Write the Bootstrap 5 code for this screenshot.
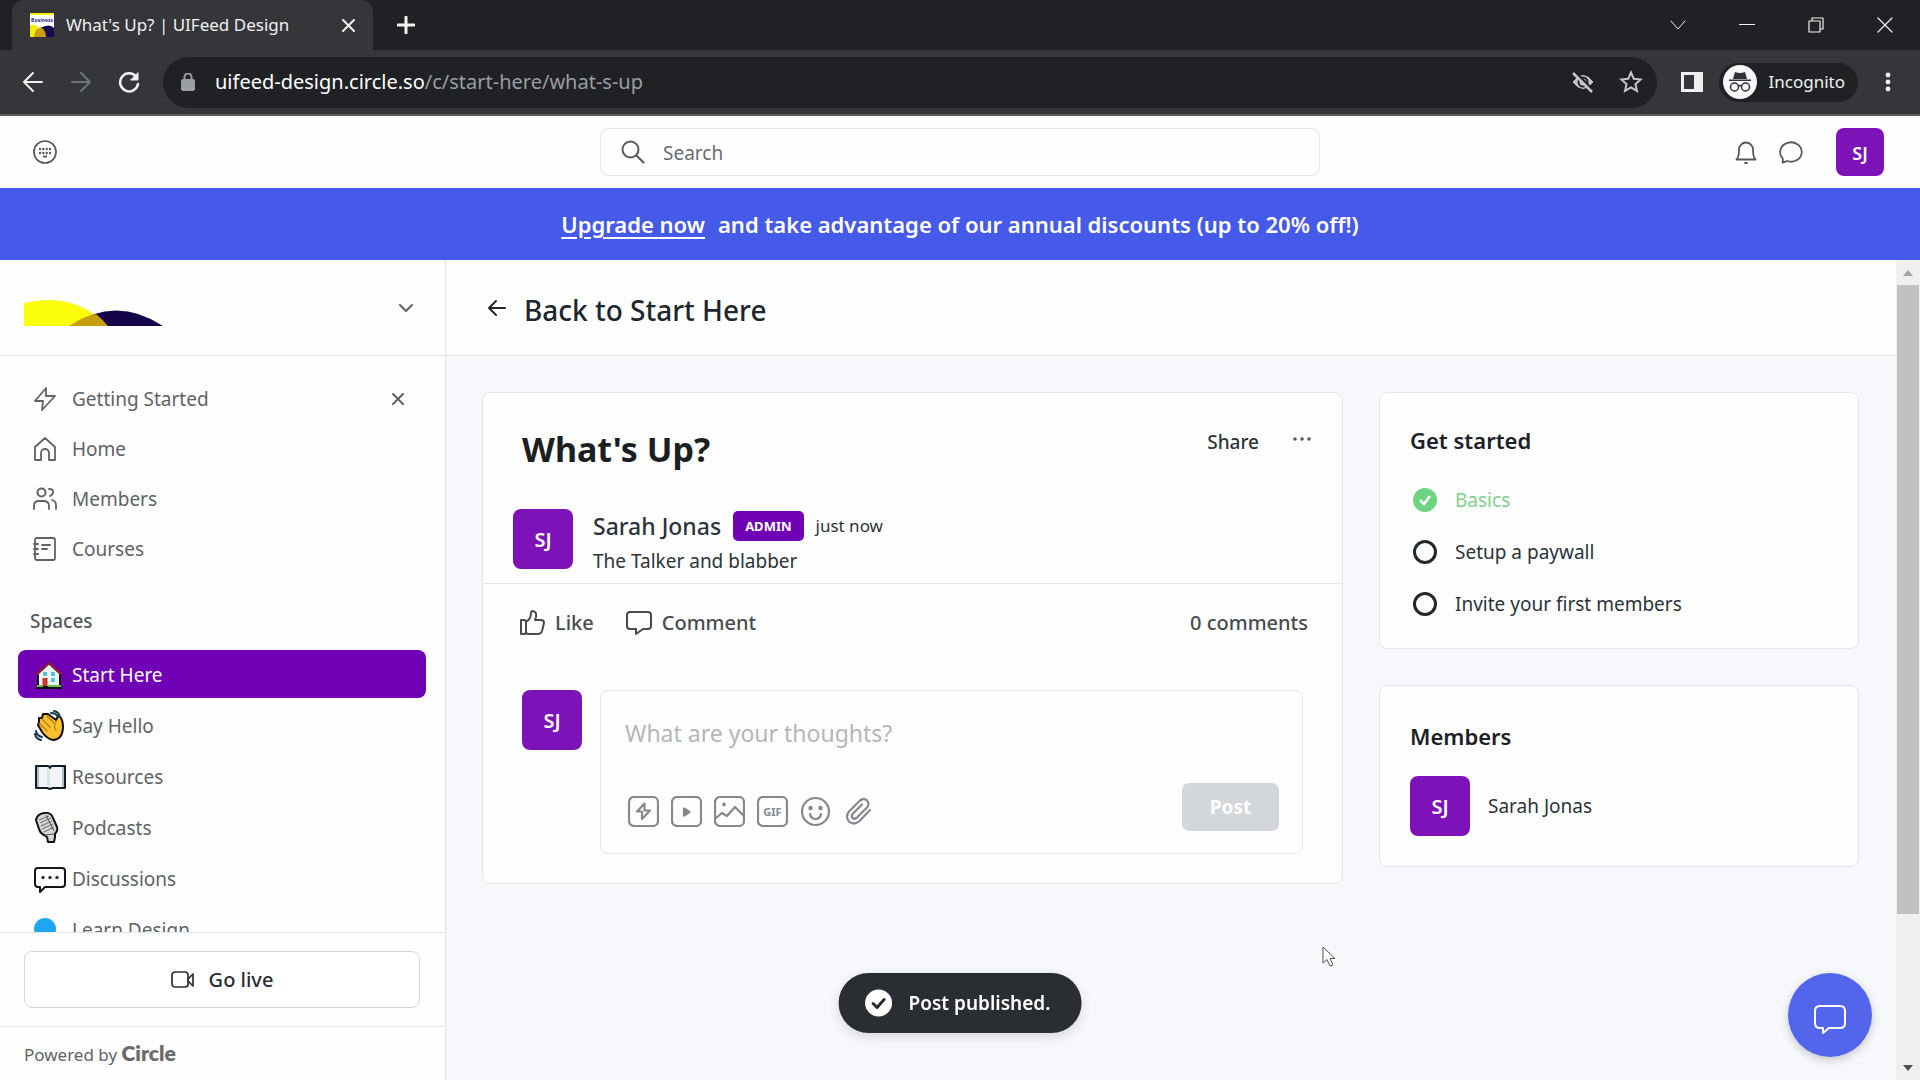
<!DOCTYPE html>
<html lang="en">
<head>
<meta charset="utf-8">
<meta name="viewport" content="width=device-width, initial-scale=1">
<title>What's Up? | UIFeed Design</title>
<link href="https://cdn.jsdelivr.net/npm/bootstrap@5.3.0/dist/css/bootstrap.min.css" rel="stylesheet">
<style>
:root{--ink:#2c333a;--soft:#55585c;--line:#e4e6e9;--brand:#7000b5}
body{font-family:"Noto Sans","Open Sans",sans-serif;font-size:19px;line-height:28px;color:var(--ink);background:#fefefe}
button,input,textarea{font-family:inherit}
svg{flex:none;display:block}
.ico{fill:none;stroke:currentColor;stroke-width:2;stroke-linecap:round;stroke-linejoin:round}
.plain{border:0;background:none;padding:0;color:inherit;display:flex;align-items:center}
a{color:inherit;text-decoration:none}
.fw-medium2{font-weight:500}
/* browser frame */
.tabstrip{height:50px;background:#202124;color:#f1f1f1;padding-left:12px}
.tab-item{width:361px;height:50px;background:#35363a;border-radius:12px 12px 0 0;font-size:17px;padding:0 18px}
.win-btns{gap:53px;padding-right:27px;height:44px}
.toolbar{height:66px;background:#35363a;border-bottom:2px solid #5a5b5f;color:#f1f1f1;padding:0 26px 0 22px}
.nav-btns{gap:26px;padding-right:23px}
.omni{height:51px;border-radius:26px;background:#202124;padding:0 14px 0 18px;color:#9a9da1;font-size:20px}
.omni b{color:#fff;font-weight:400}
.incog{height:39px;border-radius:20px;background:#202124;padding-right:13px;margin-right:26px;font-size:17px;gap:12px}
/* page */
.topbar{height:72px;padding:0 32px;color:var(--soft);display:grid;grid-template-columns:1fr minmax(300px,720px) 1fr}
.searchbox{height:48px;border:1px solid #e6e7ea;border-radius:8px;padding:0 20px;gap:16px}
.searchbox input{border:0;outline:0;background:none;font-size:19px;padding-top:3px}
.searchbox input::placeholder{color:#686b70;opacity:1}
.promo{height:72px;background:#455ae8;color:#fff;font-size:22px;font-weight:600;gap:13px}
.promo a{text-decoration:underline;text-underline-offset:4px;text-decoration-thickness:2px}
.ava{width:60px;height:60px;border-radius:8px;background:#7c12b8;color:#fff;font-weight:600;font-size:20px;display:flex;align-items:center;justify-content:center;flex:none;padding-top:2px}
.ava-sm{width:48px;height:48px;font-size:18px}
.side{width:446px;border-right:1px solid var(--line);color:#606266;flex:none}
.side-head{height:96px;border-bottom:1px solid var(--line);padding:0 29px 0 24px}
.side-nav{padding:18px 19px 0 18px;min-height:0;overflow:hidden}
.side-link{height:50px;padding:0 22px 0 15px}
.side-link,.side-link a{gap:15px}
.space-title{height:50px;padding:0 12px;color:#55585c;margin:22px 0 4px;font-size:19px;font-weight:500;display:flex;align-items:center}
.space-link{height:48px;margin-bottom:3px;padding:2px 16px 0;border-radius:8px;gap:6px}
.space-link svg{width:32px;height:32px}
.space-link.current{background:var(--brand);color:#fff}
.live{border-top:1px solid var(--line);padding:18px 25px 18px 24px;height:94px}
.live button{height:57px;border:1px solid #d5d7da;border-radius:8px;background:#fff;color:#2b2e32;font-weight:500;font-size:20px;gap:14px;width:100%}
.powered{border-top:1px solid var(--line);height:54px;padding-left:24px;font-size:17px}
.powered b{font-family:Lato,"Noto Sans",sans-serif;font-size:21px;color:#6b6b6b;font-weight:800}
.main-head{height:96px;border-bottom:1px solid var(--line);padding-left:40px;color:#20262d;gap:16px;background:#fefefe}
.main-head h1{font-size:28px;line-height:36px;font-weight:500;margin:0;padding-top:4px}
.canvas{background:#f7f8fb;padding:36px 37px 0 36px;gap:36px}
.panel{background:#fefefe;border:1px solid var(--line);border-radius:8px}
.rail{width:480px;flex:none;gap:36px}
.post-title{font-size:34px;line-height:44px;font-weight:700;margin:0;color:#1c1f22}
.post-top{padding:34px 29px 0 39px}
.post-menu{padding-top:1px}
.author{padding:38px 30px 8px;gap:20px;border-bottom:1px solid var(--line)}
.role{font-size:13px;line-height:30px;font-weight:700;background:var(--brand);color:#fff;border-radius:5px;padding:0 12px}
.name-line{font-size:23px;line-height:34px;font-weight:500;gap:12px}
.when{font-size:17px;font-weight:400}
.acts{height:78px;padding:0 34px 0 36px;color:#484b4f;font-weight:500;font-size:20px}
.acts button{gap:10px}
.reply{padding:28px 39px 29px;gap:18px}
.editor{border:1px solid var(--line);border-radius:8px;padding:24px 23px 22px 24px;height:164px}
.editor textarea{border:0;outline:0;resize:none;background:none;padding:0;font-size:23px;line-height:36px;height:36px;overflow:hidden}
.editor textarea::placeholder{color:#b3b6ba;opacity:1}
.tools{gap:12px;color:#85888d;padding:8px 0 0 3px}
.tools .ico{stroke-width:2.2}
.btn-post{width:97px;height:48px;border:0;border-radius:7px;background:#d3d6da;color:#fff;font-weight:700;font-size:19px}
.rail h2{font-size:22px;line-height:32px;font-weight:600;margin:0;color:#1c2127}
.steps{padding:31px 30px 17px;height:257px}
.steps ul{margin-top:26px}
.steps li{height:36px;margin-bottom:16px;gap:18px;padding-left:3px}
.people{padding:34px 30px 30px}
.people-row{gap:18px}
.scroller{width:24px;background:#f0f0f0;flex:none}
.scroller i{width:22px;height:629px;background:#c1c1c1;display:block}
.notice{position:fixed;left:50%;transform:translateX(-50%);bottom:47px;height:60px;border-radius:30px;background:#2a2e32;color:#fff;font-weight:600;padding:0 31px 0 26px;gap:16px;box-shadow:0 4px 12px #0002;white-space:nowrap}
.help{position:fixed;right:48px;bottom:23px;width:84px;height:84px;border-radius:50%;background:#5365ea;border:0;color:#fff;box-shadow:0 3px 10px #0003}
.pointer{position:fixed;left:1322px;top:946px}
</style>
<script src="https://cdn.jsdelivr.net/npm/bootstrap@5.3.0/dist/js/bootstrap.bundle.min.js"></script>
</head>
<body class="vh-100 overflow-hidden d-flex flex-column">
<header class="flex-shrink-0">
  <div class="tabstrip d-flex align-items-center">
    <div class="tab-item d-flex align-items-center">
      <svg width="24" height="24" viewBox="0 0 24 24"><path fill="#fff" d="M0 0h24v24H0z"/><path fill="#f4f000" d="M0 0h24v2H0zM0 12q10-2 14 12H0z"/><path fill="#160a4d" d="M10 15q10-5 14 0v9H14z"/><path fill="#caa010" d="M4 24q1-10 8-9 4 3 4 9z"/><text x="12" y="9" text-anchor="middle" font-size="5" font-weight="700" fill="#2c2a86">Business</text></svg>
      <span class="ms-2 ps-1 flex-grow-1">What's Up? | UIFeed Design</span>
      <button class="plain" aria-label="Close tab"><svg width="13" height="13" viewBox="0 0 13 13" class="ico"><path d="M1 1l11 11M12 1L1 12"/></svg></button>
    </div>
    <button class="plain ms-4" aria-label="New tab"><svg width="18" height="18" viewBox="0 0 18 18" class="ico" style="stroke-width:3"><path d="M9 1v16M1 9h16"/></svg></button>
    <div class="win-btns d-flex align-items-center ms-auto">
      <button class="plain" aria-label="Search tabs"><svg width="16" height="16" viewBox="0 0 16 16" class="ico" style="stroke-width:1"><path d="M1 4l7 8 7-8"/></svg></button>
      <button class="plain" aria-label="Minimize"><svg width="16" height="16" viewBox="0 0 16 16" class="ico" style="stroke-width:1"><path d="M0 7.500h16"/></svg></button>
      <button class="plain" aria-label="Restore"><svg width="16" height="16" viewBox="0 0 16 16" class="ico" style="stroke-width:1.200"><path d="M1 4h11v11H1zM4 4V1h11v11h-3"/></svg></button>
      <button class="plain" aria-label="Close"><svg width="16" height="16" viewBox="0 0 16 16" class="ico" style="stroke-width:1.200"><path d="M1 1l14 14M15 1L1 15"/></svg></button>
    </div>
  </div>
  <div class="toolbar d-flex align-items-center">
    <div class="nav-btns d-flex align-items-center">
      <button class="plain" aria-label="Back"><svg width="22" height="22" viewBox="0 0 22 22" class="ico"><path d="M20 11H2M11 2l-9 9 9 9"/></svg></button>
      <button class="plain text-secondary" aria-label="Forward"><svg width="22" height="22" viewBox="0 0 22 22" class="ico"><path d="M2 11h18M11 2l9 9-9 9"/></svg></button>
      <button class="plain" aria-label="Reload"><svg width="22" height="22" viewBox="0 0 22 22" class="ico" style="stroke-width:2.500"><path d="M18 5.500A9 9 0 1 0 20 13"/><path fill="currentColor" d="M20 2v7h-7z" stroke-width="1"/></svg></button>
    </div>
    <div class="omni d-flex align-items-center flex-grow-1">
      <svg width="14" height="18" viewBox="0 0 14 18"><rect y="6" width="14" height="12" rx="2" fill="#9a9da1"/><path d="M3.500 7V4a3.500 3.500 0 0 1 7 0v3" fill="none" stroke="#9a9da1" stroke-width="2"/></svg>
      <div class="ms-3 ps-1 flex-grow-1"><b>uifeed-design.circle.so</b>/c/start-here/what-s-up</div>
      <svg width="24" height="24" viewBox="0 0 24 24" fill="none" stroke="#c4c7c9" stroke-width="2.500"><path d="M2 12q10-13 20 0q-10 13-20 0z" fill="#c4c7c9" stroke-width="1"/><circle cx="12" cy="12" r="4.500" stroke="#202124" fill="#c4c7c9" stroke-width="2"/><path d="M3 1l20 20" stroke="#202124"/><path d="M2 3l19 19"/></svg>
      <svg class="ms-4" width="24" height="24" viewBox="0 0 24 24" fill="none" stroke="#c4c7c9" stroke-width="2"><path d="M12 2.500l2.800 6.300 6.900.7-5.200 4.600 1.500 6.800-6-3.500-6 3.500 1.500-6.800-5.200-4.600 6.900-.7z"/></svg>
    </div>
    <button class="plain ms-4" aria-label="Side panel"><svg width="22" height="20" viewBox="0 0 22 20"><path fill="#eef0f2" fill-rule="evenodd" d="M0 0h22v20H0zM3 3v14h10V3z"/></svg></button>
    <div class="incog d-flex align-items-center ms-3">
      <svg class="ms-1" width="34" height="34" viewBox="0 0 34 34"><circle cx="17" cy="17" r="17" fill="#f4f6f8"/><path fill="#303236" d="M12 7q5 2 10 0l2 7H10zM6 14.500h22v1.500H6z"/><g fill="none" stroke="#303236" stroke-width="1.500"><circle cx="11.500" cy="22" r="4"/><circle cx="22.500" cy="22" r="4"/><path d="M15 21q2-1 4 0"/></g></svg>
      <span>Incognito</span>
    </div>
    <button class="plain" aria-label="Menu"><svg width="10" height="20" viewBox="0 0 10 20" fill="#f1f1f1"><circle cx="4" cy="3" r="2.400"/><circle cx="4" cy="10" r="2.400"/><circle cx="4" cy="17" r="2.400"/></svg></button>
  </div>
</header>

<div class="topbar align-items-center flex-shrink-0">
  <button class="plain" aria-label="Communities"><svg width="26" height="26" viewBox="0 0 26 26" class="ico"><circle cx="13" cy="13" r="11" stroke-width="1.700"/><g fill="currentColor" stroke="none"><circle cx="8" cy="10" r="1.200"/><circle cx="11.300" cy="10" r="1.200"/><circle cx="14.700" cy="10" r="1.200"/><circle cx="18" cy="10" r="1.200"/><circle cx="8" cy="14" r="1.200"/><circle cx="11.300" cy="14" r="1.200"/><circle cx="14.700" cy="14" r="1.200"/><circle cx="18" cy="14" r="1.200"/><rect x="11" y="16.500" width="4" height="2"/></g></svg></button>
  <label class="searchbox d-flex align-items-center"><svg width="24" height="24" viewBox="0 0 24 24" class="ico"><circle cx="9.500" cy="9.500" r="8"/><path d="M15.500 15.500l7 7"/></svg><input class="flex-grow-1" type="search" placeholder="Search" aria-label="Search"></label>
  <div class="d-flex align-items-center justify-content-end">
    <button class="plain" aria-label="Notifications"><svg width="24" height="24" viewBox="0 0 24 24" class="ico"><path style="stroke-width:1.800" d="M2.500 19.500q2.500-2 2.500-10a7 7 0 0 1 14 0q0 8 2.500 10zM11 23h2"/></svg></button>
    <button class="plain ms-3 ps-1 me-3" aria-label="Messages"><svg width="26" height="24" viewBox="0 0 26 24" class="ico"><path style="stroke-width:1.800" d="M4.500 18A10.800 9.700 0 1 1 9 21q-2 1-4.500 1.500.8-2.500 0-4.500z"/></svg></button>
    <div class="ava ava-sm ms-3 me-1">SJ</div>
  </div>
</div>

<div class="promo d-flex align-items-center justify-content-center flex-shrink-0"><a href="#">Upgrade now</a><span>and take advantage of our annual discounts (up to 20% off!)</span></div>

<div class="d-flex flex-grow-1" style="min-height:0">
  <aside class="side d-flex flex-column">
    <div class="side-head d-flex align-items-center justify-content-between flex-shrink-0">
      <svg class="mt-2" width="140" height="28" viewBox="0 -2 140 28"><path fill="#fdff0a" d="M0 3Q50-9 84 26H0z"/><path fill="#140548" d="M46 26q46-31 93 0z"/><path fill="#c6a00c" d="M46 26q12-9 26-12 6 5 12 12z"/></svg>
      <button class="plain" aria-label="Community menu"><svg width="20" height="20" viewBox="0 0 20 20" class="ico"><path d="M4 7l6 6 6-6"/></svg></button>
    </div>
    <nav class="side-nav flex-grow-1">
      <div class="side-link d-flex align-items-center"><a href="#" class="d-flex align-items-center flex-grow-1"><svg width="24" height="24" viewBox="0 0 24 24" class="ico"><path style="stroke-width:1.800" d="M13 1L2 14h8l-1 9L22 9h-9z"/></svg>Getting Started</a><button class="plain" aria-label="Dismiss"><svg width="12" height="12" viewBox="0 0 12 12" class="ico"><path d="M1 1l10 10M11 1L1 11"/></svg></button></div>
      <a href="#" class="side-link d-flex align-items-center"><svg width="24" height="24" viewBox="0 0 24 24" class="ico"><path style="stroke-width:1.800" d="M2 10L12 1l10 9v13h-6v-7a4 4 0 0 0-8 0v7H2z"/></svg>Home</a>
      <a href="#" class="side-link d-flex align-items-center"><svg width="24" height="24" viewBox="0 0 24 24" class="ico"><path style="stroke-width:1.800" d="M1 22v-3q0-5 5-5h4q6 0 6 5v3M19 13q4 1 4 5v4M16 2q5 0 4 4-1 2-3 3"/><circle cx="8.500" cy="5.500" r="4"/></svg>Members</a>
      <a href="#" class="side-link d-flex align-items-center"><svg width="24" height="24" viewBox="0 0 24 24" class="ico"><path style="stroke-width:1.800" d="M4 1h16q2 0 2 2v18q0 2-2 2H4q-2 0-2-2V3q0-2 2-2zM1 7h4M1 12h4M1 17h4M9 8h8M9 12h5"/></svg>Courses</a>
      <h2 class="space-title">Spaces</h2>
      <a href="#" class="space-link current d-flex align-items-center"><svg viewBox="0 0 32 32"><path fill="#fff" stroke="#111" stroke-width="2" d="M4 14v14h22V14L15 4z"/><path fill="#eaf6fb" d="M6 14l9-8 9 8v13H6z"/><path fill="none" stroke="#8b1c3a" stroke-width="2.500" stroke-linecap="round" d="M3 15L15 4l12 11"/><path fill="#c63b2c" d="M8.500 19h5v8h-5z"/><path fill="#5cc0dc" d="M9 13h4v4H9zm8 0h4v4h-4zm0 6h4v4h-4z"/><path fill="#6cc04a" d="M3 26h6v2H3zm11 0h13v2H14z"/><path stroke="#111" d="M2 29h26" stroke-width="2"/></svg>Start Here</a>
      <a href="#" class="space-link d-flex align-items-center"><svg viewBox="0 0 32 32"><path fill="#fbc02d" stroke="#111" stroke-width="2" stroke-linejoin="round" d="M4 15l1-3 0-4 3 0 1-4 5 0 8 6 1-2q2-3 4 0 2 3 2 10-1 12-10 12-6-1-11-8z"/><path fill="none" stroke="#b77b10" stroke-width="1.200" stroke-linecap="round" d="M8 9l8 8M6 14l7 7M13 6l7 7M22 12q-3 4 0 8"/><path fill="none" stroke="#173a4a" stroke-width="2" stroke-linecap="round" d="M17 3q5 0 7 4M20 1q5 1 6 6M2 21q1 5 6 6M1 24q1 5 6 6"/></svg>Say Hello</a>
      <a href="#" class="space-link d-flex align-items-center"><svg viewBox="0 0 32 32"><path fill="#f1f5f8" stroke="#101c24" stroke-width="2" stroke-linejoin="round" d="M2 5h11q3 0 3 2 0-2 3-2h12v22H19l-3 1-3-1H2z"/><path fill="#a9c0d0" d="M3 6h2v20H3zm25 0h2v20h-2z"/><path fill="#d9e2e9" d="M13 7q3 0 3 3v15q-1-1-3-1z"/></svg>Resources</a>
      <a href="#" class="space-link d-flex align-items-center"><svg viewBox="0 0 32 32"><path fill="#d5d7d8" stroke="#111" stroke-width="2" stroke-linejoin="round" d="M2 8q1-6 8-7 7-1 9 5l4 9q1 4-2 7v3l-1 5h-6l-1-5-3-2q-4-2-5-6z"/><path stroke="#77797b" stroke-width="1.200" fill="none" d="M5 8l10-4M6 11l11-5M7 14l11-5M8 17l11-5M10 20l10-5"/><path stroke="#4d5052" fill="none" d="M12 3l8 16M11 23l9-1"/></svg>Podcasts</a>
      <a href="#" class="space-link d-flex align-items-center"><svg viewBox="0 0 32 32"><path fill="#fff" stroke="#161616" stroke-width="2" stroke-linejoin="round" d="M4 5h24q3 0 3 3v13q0 3-3 3H11l-5 5v-5H4q-3 0-3-3V8q0-3 3-3z"/><g fill="#333"><circle cx="9" cy="14.500" r="1.700"/><circle cx="16" cy="14.500" r="1.700"/><circle cx="23" cy="14.500" r="1.700"/></g></svg>Discussions</a>
      <a href="#" class="space-link d-flex align-items-center"><svg viewBox="0 0 32 32"><circle cx="11" cy="15" r="11" fill="#1ea7ee"/></svg>Learn Design</a>
    </nav>
    <div class="live flex-shrink-0"><button class="d-flex align-items-center justify-content-center"><svg width="24" height="18" viewBox="0 0 24 18" class="ico"><rect x="1" y="1" width="16" height="15" rx="3" style="stroke-width:1.700"/><path style="stroke-width:1.700" d="M17 8l5-5v12l-5-5"/></svg>Go live</button></div>
    <div class="powered d-flex align-items-center flex-shrink-0"><span>Powered by <b>Circle</b></span></div>
  </aside>

  <main class="flex-grow-1 d-flex flex-column" style="min-width:0">
    <div class="main-head d-flex align-items-center flex-shrink-0"><svg width="22" height="20" viewBox="0 0 22 20" class="ico"><path d="M19 10H3M10 3l-7 7 7 7"/></svg><h1><a href="#">Back to Start Here</a></h1></div>
    <div class="canvas flex-grow-1 d-flex align-items-start">
      <article class="panel flex-grow-1">
        <div class="post-top d-flex justify-content-between">
          <h2 class="post-title">What's Up?</h2>
          <div class="post-menu d-flex align-items-start"><button class="plain fw-medium2">Share</button><button class="plain ms-4 ps-2 pt-2" aria-label="More"><svg width="22" height="6" viewBox="0 0 22 6" fill="#55585c"><circle cx="4" cy="3" r="1.800"/><circle cx="11" cy="3" r="1.800"/><circle cx="18" cy="3" r="1.800"/></svg></button></div>
        </div>
        <div class="author d-flex">
          <div class="ava">SJ</div>
          <div><div class="name-line d-flex align-items-center"><span>Sarah Jonas</span><span class="role">ADMIN</span><span class="when">just now</span></div><div class="pt-1">The Talker and blabber</div></div>
        </div>
        <div class="acts d-flex align-items-center">
          <button class="plain fw-medium2"><svg width="26" height="26" viewBox="0 0 26 26" class="ico"><path d="M2 10h3q2 0 2 2v10q0 2-2 2H2zM7 12q5-3 5-9 0-2 2-2 4 1 3 6l-1 3h6q3 0 3 3l-2 8q-1 3-4 3h-9q-3 0-3-2"/></svg>Like</button>
          <button class="plain fw-medium2 ms-4 ps-2"><svg width="26" height="26" viewBox="0 0 26 26" class="ico"><path d="M4 2h18q3 0 3 3v11q0 3-3 3h-5l-7 5v-5H4q-3 0-3-3V5q0-3 3-3z"/></svg>Comment</button>
          <span class="ms-auto">0 comments</span>
        </div>
        <div class="reply d-flex">
          <div class="ava">SJ</div>
          <div class="editor d-flex flex-column justify-content-between flex-grow-1">
            <textarea class="w-100" placeholder="What are your thoughts?" aria-label="Comment"></textarea>
            <div class="d-flex align-items-center justify-content-between">
              <div class="tools d-flex align-items-center">
                <button class="plain" aria-label="Insert"><svg width="31" height="31" viewBox="0 0 31 31" class="ico"><rect x="1" y="1" width="29" height="29" rx="5"/><path d="M16.500 7.500l-7.500 8h5v7.500l8-8.500h-5.500z"/></svg></button>
                <button class="plain" aria-label="Video"><svg width="31" height="31" viewBox="0 0 31 31" class="ico"><rect x="1" y="1" width="29" height="29" rx="5"/><path fill="currentColor" d="M13 12.500l5.500 3.500-5.500 3.500z"/></svg></button>
                <button class="plain" aria-label="Image"><svg width="31" height="31" viewBox="0 0 31 31" class="ico"><rect x="1" y="1" width="29" height="29" rx="5"/><path d="M2 22l6-5 5 3 8-9 9 9"/><circle cx="10" cy="8.500" r=".8"/></svg></button>
                <button class="plain" aria-label="GIF"><svg width="31" height="31" viewBox="0 0 31 31" class="ico"><rect x="1" y="1" width="29" height="29" rx="5"/><text x="15.500" y="20" text-anchor="middle" font-size="11" font-weight="700" fill="currentColor" stroke="none">GIF</text></svg></button>
                <button class="plain" aria-label="Emoji"><svg width="31" height="31" viewBox="0 0 31 31" class="ico"><circle cx="15.500" cy="15.500" r="13.500"/><g fill="currentColor" stroke="none"><circle cx="10.500" cy="12" r="2.200"/><circle cx="20.500" cy="12" r="2.200"/></g><path d="M10 18q1 5 5.500 5t5.500-5"/></svg></button>
                <button class="plain" aria-label="Attach"><svg width="31" height="31" viewBox="0 0 31 31" class="ico"><path d="M27 14L16 25.500q-5 4-10 0-4-5 0-10L17 4.500q4-3 7 0 3 4 0 7L13.500 22q-2 1.500-4 0-1.500-2 0-4L19 8.500"/></svg></button>
              </div>
              <button class="btn-post">Post</button>
            </div>
          </div>
        </div>
      </article>
      <div class="rail d-flex flex-column">
        <section class="panel steps">
          <h2>Get started</h2>
          <ul class="list-unstyled mb-0">
            <li class="d-flex align-items-center" style="color:#7ed08e"><svg width="24" height="24" viewBox="0 0 24 24"><circle cx="12" cy="12" r="12" fill="#6fd482"/><path fill="none" stroke="#fff" stroke-width="2.500" d="M7 12l4 4 6-8"/></svg>Basics</li>
            <li class="d-flex align-items-center"><svg width="24" height="24" viewBox="0 0 24 24" fill="none" stroke="#23282e" stroke-width="3"><circle cx="12" cy="12" r="10.500"/></svg>Setup a paywall</li>
            <li class="d-flex align-items-center"><svg width="24" height="24" viewBox="0 0 24 24" fill="none" stroke="#23282e" stroke-width="3"><circle cx="12" cy="12" r="10.500"/></svg>Invite your first members</li>
          </ul>
        </section>
        <section class="panel people">
          <h2>Members</h2>
          <div class="people-row d-flex align-items-center mt-4"><div class="ava">SJ</div><span>Sarah Jonas</span></div>
        </section>
      </div>
    </div>
  </main>
  <div class="scroller d-flex flex-column align-items-center justify-content-between">
    <div class="d-flex flex-column align-items-center"><svg width="24" height="25" viewBox="0 0 24 25"><path fill="#a3a3a3" d="M7 16l5-6 5 6z"/></svg><i></i></div>
    <svg width="24" height="25" viewBox="0 0 24 25"><path fill="#505050" d="M7 10l5 6 5-6z"/></svg>
  </div>
</div>

<div class="notice d-flex align-items-center" role="status"><svg width="28" height="28" viewBox="0 0 28 28"><circle cx="14" cy="14" r="13.500" fill="#fff"/><path fill="none" stroke="#2a2e32" stroke-width="3" stroke-linecap="round" stroke-linejoin="round" d="M8.500 14.500l4 4 7-8"/></svg>Post published.</div>
<button class="help d-flex align-items-center justify-content-center" aria-label="Chat"><svg class="mt-2" width="32" height="32" viewBox="0 0 32 32" class="ico"><path fill="none" stroke="#fff" stroke-width="2" stroke-linejoin="round" d="M6 3h20q5 0 5 5v12q0 5-5 5H15l-6 5v-5H6q-5 0-5-5V8q0-5 5-5z"/></svg></button>
<svg class="pointer" width="14" height="22" viewBox="0 0 14 22"><path fill="#fff" stroke="#555" d="M1 1v16l4-3.500 3 6.500 3-1-3-6.500h5z"/></svg>
</body>
</html>
